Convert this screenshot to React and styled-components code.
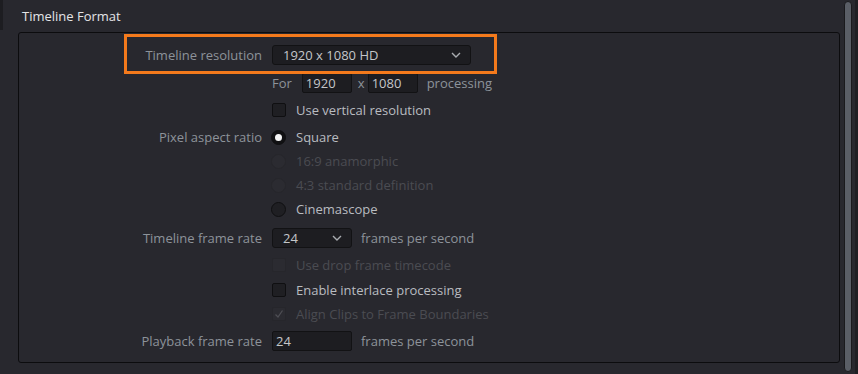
import React from 'react';
import styled, { createGlobalStyle, css } from 'styled-components';

const GlobalStyle = createGlobalStyle`
  html, body {
    margin: 0;
    padding: 0;
    background: #28282e;
  }
  body {
    font-family: 'Open Sans', 'Noto Sans', sans-serif;
    font-size: 13px;
  }
`;

const rows = [
  { type: 'resolution', gap: 0 },
  { type: 'processing', gap: 4 },
  { type: 'check', text: 'Use vertical resolution', gap: 3 },
  { type: 'radio', label: 'Pixel aspect ratio', text: 'Square', checked: true, gap: 3 },
  { type: 'radio', text: '16:9 anamorphic', disabled: true, gap: 0 },
  { type: 'radio', text: '4:3 standard definition', disabled: true, gap: 0 },
  { type: 'radio', text: 'Cinemascope', gap: 0 },
  { type: 'framerate', gap: 5 },
  { type: 'check', text: 'Use drop frame timecode', disabled: true, gap: 3 },
  { type: 'check', text: 'Enable interlace processing', gap: 1 },
  { type: 'check', text: 'Align Clips to Frame Boundaries', disabled: true, checked: true, gap: 0 },
  { type: 'playback', gap: 3 },
];

const Chevron = () => (
  <svg width="10" height="6" viewBox="0 0 10 6">
    <path d="M1 1 L5 5 L9 1" fill="none" stroke="#a9acb0" strokeWidth="1.4" />
  </svg>
);

const Tick = () => (
  <svg width="12" height="12" viewBox="0 0 12 12">
    <path d="M2.5 6.5 L5 9 L9.5 2.5" fill="none" stroke="#4e4e54" strokeWidth="1.3" />
  </svg>
);

const App = () => {
  const renderControl = (row) => {
    switch (row.type) {
      case 'resolution':
        return (
          <Select $width={199}>
            <span>1920 x 1080 HD</span>
            <Chevron />
          </Select>
        );
      case 'processing':
        return (
          <Inline>
            <Muted $after={10}>For</Muted>
            <Field $width={50}>1920</Field>
            <Muted $before={6} $after={3}>x</Muted>
            <Field $width={50}>1080</Field>
            <Muted $before={9}>processing</Muted>
          </Inline>
        );
      case 'framerate':
        return (
          <Inline>
            <Select $width={80}>
              <span>24</span>
              <Chevron />
            </Select>
            <Muted $before={9}>frames per second</Muted>
          </Inline>
        );
      case 'playback':
        return (
          <Inline>
            <Field $width={80}>24</Field>
            <Muted $before={9}>frames per second</Muted>
          </Inline>
        );
      case 'radio':
        return (
          <Option>
            <Radio $checked={row.checked} $disabled={row.disabled} />
            <OptionText $disabled={row.disabled}>{row.text}</OptionText>
          </Option>
        );
      default:
        return (
          <Option>
            <Checkbox $disabled={row.disabled}>{row.checked && <Tick />}</Checkbox>
            <OptionText $disabled={row.disabled}>{row.text}</OptionText>
          </Option>
        );
    }
  };

  const labelFor = (row) => {
    if (row.type === 'resolution') return 'Timeline resolution';
    if (row.type === 'framerate') return 'Timeline frame rate';
    if (row.type === 'playback') return 'Playback frame rate';
    return row.label || '';
  };

  return (
    <>
      <GlobalStyle />
      <Page>
        <Main>
          <Header>
            <EdgeTab />
            <Title>Timeline Format</Title>
          </Header>
          <Panel>
            <Highlight />
            {rows.map((row, i) => (
              <Row key={i} $gap={row.gap}>
                <Label>{labelFor(row)}</Label>
                {renderControl(row)}
              </Row>
            ))}
          </Panel>
        </Main>
        <ScrollTrack>
          <Thumb />
        </ScrollTrack>
        <RightEdge />
      </Page>
    </>
  );
};

export default App;

const Page = styled.div`
  display: flex;
  width: 858px;
  height: 374px;
  background: #28282e;
  overflow: hidden;
`;

const Main = styled.div`
  width: 844px;
  display: flex;
  flex-direction: column;
`;

const Header = styled.div`
  position: relative;
  height: 32px;
  display: flex;
  align-items: center;
  padding-left: 22px;
`;

const EdgeTab = styled.div`
  position: absolute;
  left: 0;
  top: 0;
  width: 3px;
  height: 30px;
  background: #1d1d21;
`;

const Title = styled.div`
  color: #e4e4e6;
  font-size: 13px;
  margin-top: -1px;
`;

const Panel = styled.div`
  position: relative;
  margin-left: 18px;
  width: 820px;
  height: 319px;
  padding-top: 10px;
  border: 1px solid #0c0c0e;
  border-radius: 3px;
  display: flex;
  flex-direction: column;
`;

const Highlight = styled.div`
  position: absolute;
  left: 105px;
  top: 1px;
  width: 367px;
  height: 34px;
  border: 3px solid #f47a1c;
  pointer-events: none;
`;

const Row = styled.div`
  display: grid;
  grid-template-columns: 243px 1fr;
  column-gap: 10px;
  align-items: center;
  height: 24px;
  margin-top: ${(p) => p.$gap}px;
`;

const Label = styled.div`
  text-align: right;
  color: #8d939a;
  white-space: nowrap;
`;

const Inline = styled.div`
  display: flex;
  align-items: center;
`;

const Muted = styled.span`
  color: #8d939a;
  margin-left: ${(p) => p.$before || 0}px;
  margin-right: ${(p) => p.$after || 0}px;
`;

const boxBase = css`
  height: 20px;
  box-sizing: border-box;
  background: #1d1d21;
  border: 1px solid #121214;
  border-radius: 3px;
  color: #c4c6c9;
  display: flex;
  align-items: center;
`;

const Select = styled.div`
  ${boxBase};
  width: ${(p) => p.$width}px;
  justify-content: space-between;
  padding: 0 9px 0 10px;
`;

const Field = styled.div`
  ${boxBase};
  width: ${(p) => p.$width}px;
  padding-left: 3px;
  border-radius: 2px;
`;

const Option = styled.div`
  display: flex;
  align-items: center;
  gap: 10px;
`;

const OptionText = styled.span`
  color: ${(p) => (p.$disabled ? '#4b4c52' : '#b9bcc0')};
`;

const Checkbox = styled.div`
  width: 14px;
  height: 14px;
  box-sizing: border-box;
  border-radius: 2px;
  border: 1px solid ${(p) => (p.$disabled ? '#26262b' : '#0f0f11')};
  background: ${(p) => (p.$disabled ? '#2b2b31' : '#1f1f23')};
  display: flex;
  align-items: center;
  justify-content: center;
`;

const Radio = styled.div`
  width: 15px;
  height: 15px;
  box-sizing: border-box;
  border-radius: 50%;
  border: 1px solid ${(p) => (p.$disabled ? '#26262b' : '#0f0f11')};
  background: ${(p) => (p.$disabled ? '#2b2b31' : p.$checked ? '#111113' : '#1f1f23')};
  display: flex;
  align-items: center;
  justify-content: center;
  margin-left: -1px;

  &::after {
    content: '';
    display: ${(p) => (p.$checked ? 'block' : 'none')};
    width: 7px;
    height: 7px;
    border-radius: 50%;
    background: #f4f4f4;
  }
`;

const ScrollTrack = styled.div`
  width: 11px;
  padding: 1px 0 1px 1px;
  display: flex;
`;

const Thumb = styled.div`
  width: 8px;
  height: 371px;
  border-radius: 4px;
  background: #5a5e66;
  border: 1px solid #1a1a1d;
  box-sizing: border-box;
`;

const RightEdge = styled.div`
  width: 3px;
  background: #1f1f23;
`;
